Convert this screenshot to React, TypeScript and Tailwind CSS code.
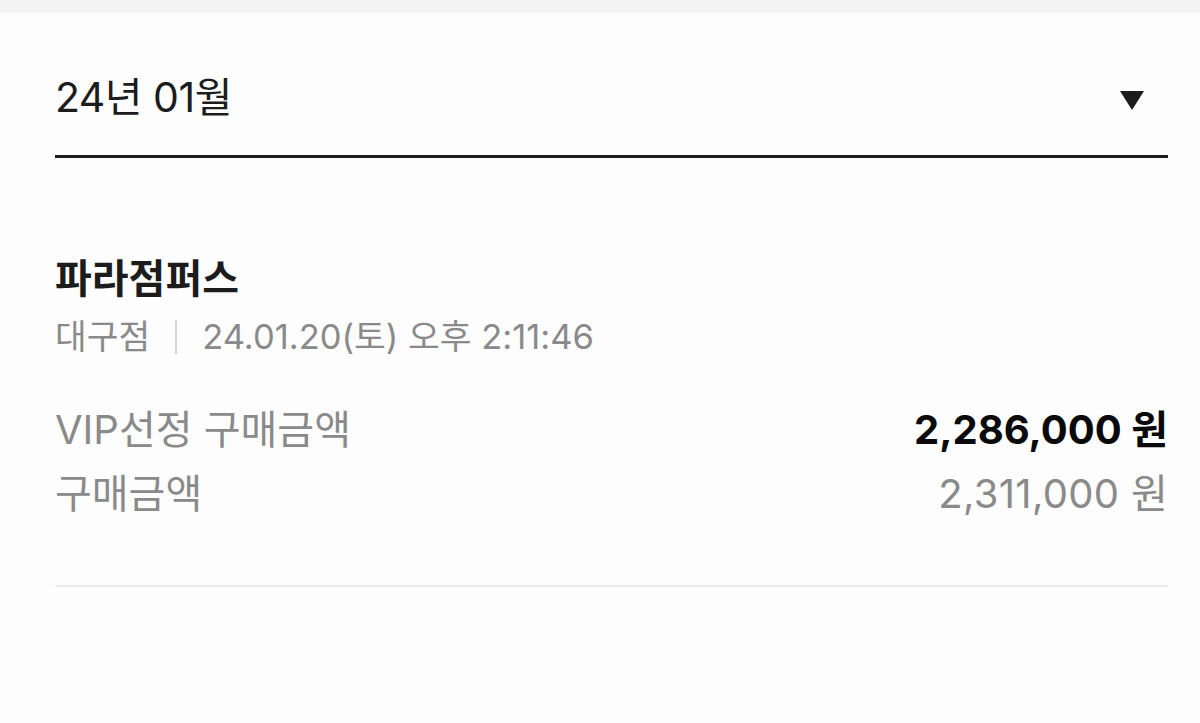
export default function App() {
  return (
    <div
      className="w-[1200px] h-[723px] bg-[#fdfdfd] overflow-hidden"
      style={{ fontFamily: 'Inter, "Noto Sans CJK KR", sans-serif' }}
    >
      <div className="h-[13px] bg-[#f4f4f4]" />
      <div className="pl-[55px] pr-[32px]">
        {/* month select */}
        <div className="flex items-center justify-between h-[145px] border-b-[3px] border-[#1c1c1c] pt-[28px]">
          <span className="text-[41px] text-[#1c1c1c] tracking-[-0.5px]">24년 01월</span>
          <svg width="24" height="19" viewBox="0 0 24 19" className="mr-[24px] mt-[4px]">
            <path d="M0 0 L24 0 L12 19 Z" fill="#1c1c1c" />
          </svg>
        </div>

        {/* purchase item */}
        <div className="pt-[97px] pb-[67px] border-b-2 border-[#ececec]">
          <div className="text-[40px] font-bold text-[#1c1c1c] leading-[48px]">파라점퍼스</div>
          <div className="flex items-center text-[34.5px] text-[#8a8a8a] leading-[46px] mt-[11px]">
            <span>대구점</span>
            <span className="w-[2px] h-[34px] bg-[#d6d6d6] mx-[25px]" />
            <span>24.01.20(토) 오후 2:11:46</span>
          </div>
          <div className="flex items-center justify-between text-[40px] leading-[48px] mt-[46px]">
            <span className="text-[#8a8a8a]">VIP선정 구매금액</span>
            <span className="font-bold text-[#0a0a0a]">2,286,000 원</span>
          </div>
          <div className="flex items-center justify-between text-[40px] leading-[48px] mt-[16px] text-[#8a8a8a]">
            <span>구매금액</span>
            <span className="tracking-[0.3px]">2,311,000 원</span>
          </div>
        </div>
      </div>
    </div>
  );
}
